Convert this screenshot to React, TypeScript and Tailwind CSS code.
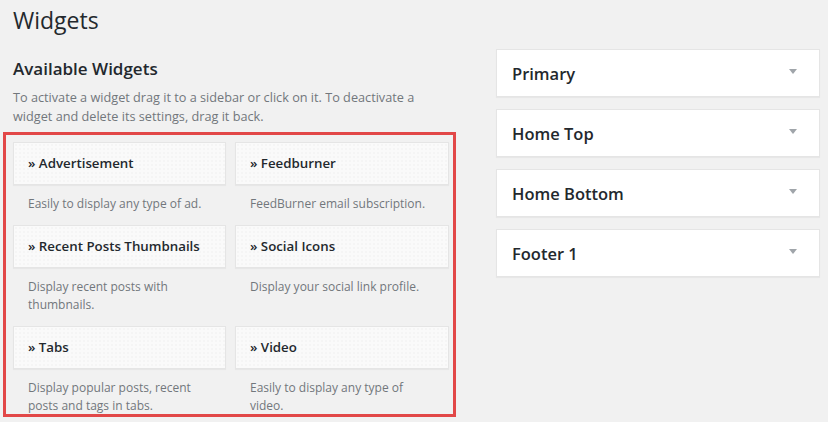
import React from "react";

const widgets = [
  { title: "Advertisement", desc: "Easily to display any type of ad." },
  { title: "Feedburner", desc: "FeedBurner email subscription." },
  { title: "Recent Posts Thumbnails", desc: "Display recent posts with thumbnails." },
  { title: "Social Icons", desc: "Display your social link profile." },
  { title: "Tabs", desc: "Display popular posts, recent posts and tags in tabs." },
  { title: "Video", desc: "Easily to display any type of video." },
];

const sidebars = ["Primary", "Home Top", "Home Bottom", "Footer 1"];

export default function App() {
  return (
    <div className="w-[828px] h-[422px] bg-[#f1f1f1] flex overflow-hidden font-['Open_Sans',sans-serif] text-[#23282d]">
      <div className="w-[470px] shrink-0 flex flex-col">
        <h1 className="pl-[13px] pt-[6px] text-[23px] leading-[29px] font-normal">Widgets</h1>
        <h2 className="pl-[13px] mt-[23px] text-[17px] leading-[22px] font-semibold">Available Widgets</h2>
        <p className="pl-[13px] mt-[8px] w-[440px] text-[12.7px] leading-[19px] text-[#72777c]">
          To activate a widget drag it to a sidebar or click on it. To deactivate a widget and delete its settings, drag it back.
        </p>
        <div className="ml-[3px] mt-[6px] w-[453px] h-[285px] shrink-0 border-[3px] border-[#e24848] pl-[7px] pt-[7px] overflow-hidden">
          <div className="grid grid-cols-[213px_214px] gap-x-[9px]">
            {widgets.map((w) => (
              <div key={w.title} className="flex flex-col">
                <div className="border border-[#e5e5e5] bg-[#fafafa] bg-[radial-gradient(#efefef_0.6px,transparent_0.8px)] bg-[length:4px_4px] shadow-[0_1px_1px_rgba(0,0,0,0.04)] pl-[14px] py-[14px] text-[13.3px] leading-[13px] font-semibold text-[#23282d]">
                  » {w.title}
                </div>
                <div className="pt-[10px] pb-[12px] pl-[15px] pr-[18px] text-[12px] leading-[18px] text-[#72777c]">
                  {w.desc}
                </div>
              </div>
            ))}
          </div>
        </div>
      </div>
      <div className="ml-[26px] pt-[49px] w-[324px] flex flex-col gap-[12px]">
        {sidebars.map((s) => (
          <div
            key={s}
            className="h-[48px] bg-white border border-[#e5e5e5] shadow-[0_1px_1px_rgba(0,0,0,0.04)] flex items-center justify-between pl-[15px] pr-[22px]"
          >
            <span className="text-[16.5px] leading-[22px] font-semibold text-[#23282d] translate-y-[1px]">{s}</span>
            <svg width="8" height="5" viewBox="0 0 8 5" className="mb-[4px]">
              <polygon points="0,0 8,0 4,5" fill="#a0a5aa" />
            </svg>
          </div>
        ))}
      </div>
    </div>
  );
}
